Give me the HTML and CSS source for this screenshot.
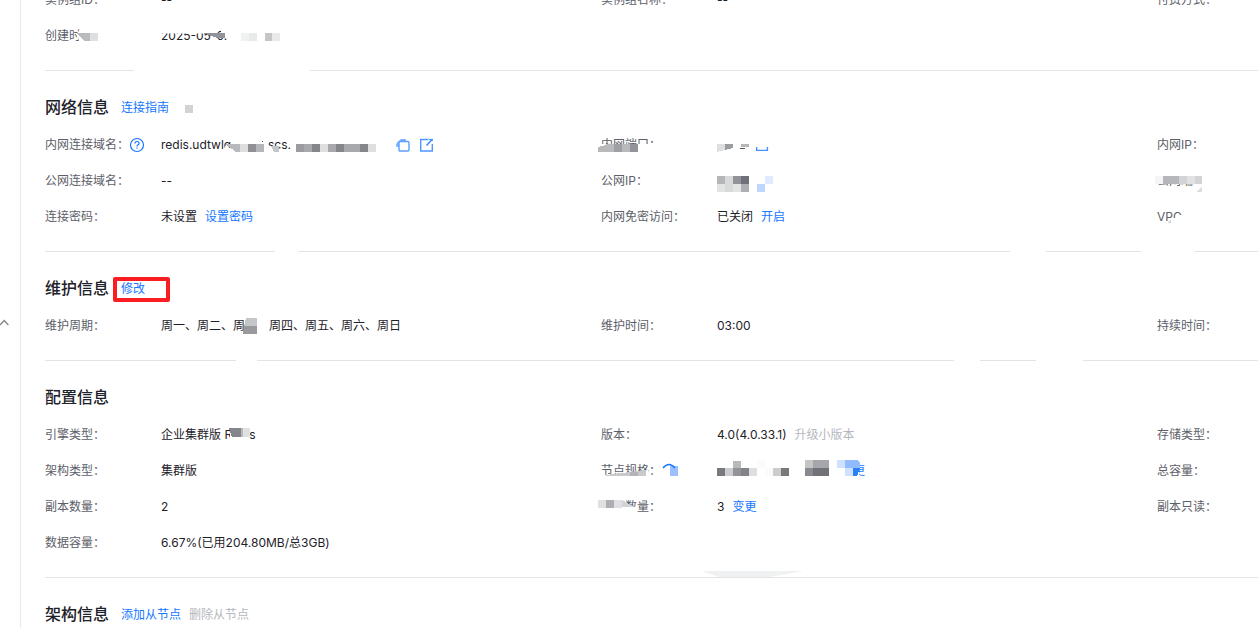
FILE: index.html
```html
<!DOCTYPE html>
<html lang="zh-CN">
<head>
<meta charset="utf-8">
<title>实例详情</title>
<link rel="stylesheet" href="styles.css">
</head>
<body>
<div class="page">
  <aside class="rail">
    <button class="collapse" type="button" aria-label="收起">
      <svg width="9" height="7" viewBox="0 0 9 7"><path d="M0 6 4.2 1.6 8.4 6" fill="none" stroke="#85878c" stroke-width="1.4"/></svg>
    </button>
  </aside>
  <main class="content">
    <section class="section section-first">
      <dl class="fields">
        <div class="field"><dt>实例组ID：</dt><dd>--</dd></div>
        <div class="field"><dt>实例组名称：</dt><dd>--</dd></div>
        <div class="field"><dt>付费方式：</dt><dd></dd></div>
        <div class="field"><dt>创建时间：</dt><dd>2025-05-0.</dd></div>
      </dl>
    </section>

    <section class="section">
      <header class="head"><h2>网络信息</h2><a href="#">连接指南</a></header>
      <dl class="fields">
        <div class="field">
          <dt>内网连接域名：<svg class="help" width="16" height="16" viewBox="0 0 16 16" fill="none" stroke="#1677ff" stroke-width="1.2"><circle cx="8" cy="8" r="6.5"/><path d="M5.9 6.6c0-1.3.9-2.1 2.1-2.1s2.1.8 2.1 1.9c0 1.3-2.1 1.5-2.1 3"/><path d="M8 10.5v1.3"/></svg></dt>
          <dd>
            <span class="host"><span>redis.udtwlq</span><span>scs.</span></span>
            <a class="icon" href="#" aria-label="复制"><svg width="16" height="16" viewBox="0 0 16 16" fill="none"><path d="M2.500 10V6.500" stroke="#8bbcff" stroke-width="3"/><path d="M2 5.500 6 2h5v2.500H4.500V8H2z" fill="#7fb3ff"/><rect x="4" y="4.500" width="10" height="9.500" rx="1" fill="#fff" stroke="#5b9fff" stroke-width="1.400"/></svg></a>
            <a class="icon" href="#" aria-label="编辑"><svg width="16" height="16" viewBox="0 0 16 16" fill="none" stroke="#4d96ff" stroke-width="1.400"><path d="M9.500 2.500H1.700v11.500h11.600V7"/><path d="M7.500 8.500 13.500 2" stroke="#2e84ff"/><path d="M10 2.500h3.300V4" stroke-width="1"/></svg></a>
          </dd>
        </div>
        <div class="field"><dt>内网端口：</dt><dd></dd></div>
        <div class="field"><dt>内网IP：</dt><dd></dd></div>
        <div class="field"><dt>公网连接域名：</dt><dd>--</dd></div>
        <div class="field"><dt>公网IP：</dt><dd></dd></div>
        <div class="field"><dt>公网端口：</dt><dd></dd></div>
        <div class="field"><dt>连接密码：</dt><dd>未设置<a href="#">设置密码</a></dd></div>
        <div class="field"><dt>内网免密访问：</dt><dd>已关闭<a href="#">开启</a></dd></div>
        <div class="field"><dt>VPC</dt><dd></dd></div>
      </dl>
    </section>

    <section class="section">
      <header class="head"><h2>维护信息</h2><a class="marked" href="#">修改</a></header>
      <dl class="fields">
        <div class="field"><dt>维护周期：</dt><dd>周一、周二、周三、周四、周五、周六、周日</dd></div>
        <div class="field"><dt>维护时间：</dt><dd>03:00</dd></div>
        <div class="field"><dt>持续时间：</dt><dd></dd></div>
      </dl>
    </section>

    <section class="section">
      <header class="head"><h2>配置信息</h2></header>
      <dl class="fields">
        <div class="field"><dt>引擎类型：</dt><dd>企业集群版 Redis</dd></div>
        <div class="field"><dt>版本：</dt><dd>4.0(4.0.33.1)<button class="text-button" type="button" disabled>升级小版本</button></dd></div>
        <div class="field"><dt>存储类型：</dt><dd></dd></div>
        <div class="field"><dt>架构类型：</dt><dd>集群版</dd></div>
        <div class="field"><dt>节点规格：</dt><dd><span class="spec"></span><a href="#">变更</a></dd></div>
        <div class="field"><dt>总容量：</dt><dd></dd></div>
        <div class="field"><dt>副本数量：</dt><dd>2</dd></div>
        <div class="field"><dt>节点数量：</dt><dd>3<a href="#">变更</a></dd></div>
        <div class="field"><dt>副本只读：</dt><dd></dd></div>
        <div class="field"><dt>数据容量：</dt><dd>6.67%(已用204.80MB/总3GB)</dd></div>
      </dl>
    </section>

    <section class="section">
      <header class="head"><h2>架构信息</h2><a href="#">添加从节点</a><button class="text-button" type="button" disabled>删除从节点</button></header>
    </section>
  </main>

  <svg class="redaction" width="1258" height="628" viewBox="0 0 1258 628" aria-hidden="true">
    <!-- erased areas -->
    <g fill="#fff">
      <path d="M76 34 81 29h20v17H82z"/>
      <path d="M160 26h70v7.500h-70zM213 33h8v-4h-8z"/>
      <path d="M134 68h176v5H134z"/>
      <path d="M225 146 236 150v6h-11z"/>
      <path d="M266 138h7v4h-7zM266 146h6l5 9h-13z"/>
      <path d="M598 144h80v13h-80z"/>
      <path d="M1155 172h60v9.500h-60zM1193 180h25v12h-25z"/>
      <path d="M1178 216h12v8h-15zM1173 218h8v6h-8z"/>
      <path d="M275 249h23v5h-23zM1010 249h36v5h-36zM1141 249h53v5h-53z"/>
      <path d="M247 316h21v18h-24z"/>
      <path d="M236 358h21v5h-21zM954 358h26v5h-26zM1036 358h47v5h-47z"/>
      <path d="M230 426h20v16h-20z"/>
      <path d="M605 475 648 470v9h-43zM597 498h28v17h-28zM625 507h12v8h-12zM625 498h17v4z"/>
      <path d="M835 460h24v18h-24z"/>
    </g>
    <g shape-rendering="crispEdges">
      <path fill="#b9bbbd" d="M76 33h14v8h-6z"/><path fill="#dedfe0" d="M90 33h8v8h-8z"/>
      <path fill="#909399" d="M202 33h23v5h-8z"/>
      <path fill="#f0f1f1" d="M241 33h8v8h-8z"/><path fill="#e8e9e9" d="M249 33h8v8h-8zM272 33h8v8h-8z"/><path fill="#c4c5c7" d="M265 33h7v8h-7z"/>
      <path fill="#d2d3d5" d="M185 105h8v8h-8z"/>
      <path fill="#b8b9bc" d="M225 144h15v8h-4z"/><path fill="#dedede" d="M240 144h8v8h-8z"/><path fill="#8e9095" d="M248 144h8v8h-8z"/><path fill="#b5b6ba" d="M256 144h8v8h-8z"/>
      <path fill="#55585e" d="M262 141h1v1h-1z"/>
      <path fill="#c5c6c8" d="M271 146h8v6h-5z"/>
      <path fill="#9b9ca0" d="M296 144h8v8h-8z"/><path fill="#a8a9ad" d="M304 144h8v8h-8zM328 144h8v8h-8zM344 144h16v8h-16z"/><path fill="#85868b" d="M312 144h8v8h-8zM336 144h8v8h-8zM360 144h8v8h-8z"/><path fill="#dfdfe0" d="M320 144h8v8h-8zM368 144h8v8h-8z"/>
      <path fill="#b8b9bb" d="M598 147 606 145v7h-8zM606 144h8v8h-8zM622 144h8v8h-8z"/><path fill="#9d9fa4" d="M614 144h8v8h-8z"/><path fill="#929499" d="M630 144h8v8h-8z"/>
      <path fill="#dedfe0" d="M717 144h8v6l-8 2z"/><path fill="#9b9da1" d="M725 144h8v4l-8 2z"/><path fill="#b6b7ba" d="M741 144h8v3h-8z"/><path fill="#55585e" d="M740 148h5v1h-5z"/>
      <path fill="#b5b6b8" d="M717 176h8v8h-8z"/><path fill="#d8d9da" d="M725 176h8v8h-8zM725 184h8v8h-8z"/><path fill="#919398" d="M733 176h8v8h-8z"/><path fill="#6e7177" d="M741 176h8v8h-8z"/><path fill="#e2e3e3" d="M717 184h8v8h-8zM733 184h8v8h-8z"/><path fill="#adafb3" d="M741 184h8v8h-8z"/>
      <path fill="#e0ebff" d="M765 176h8v8h-8z"/><path fill="#bfd6ff" d="M757 184h8v8h-8z"/>
      <path fill="#f5f5f5" d="M1155 176h8v8h-8z"/><path fill="#b6b7bb" d="M1163 176h16v8h-16z"/><path fill="#d2d3d5" d="M1179 176h8v8h-8zM1195 176h7v8h-7z"/><path fill="#e2e2e3" d="M1187 176h8v8h-8z"/>
      <path fill="#dcdddd" d="M1202 186v6h-6z"/><path fill="#d4d5d6" d="M1171 219v4h-4z"/>
      <path fill="#c5c6c8" d="M246 318h11v8h-13z"/><path fill="#999a9e" d="M244 326h13v8h-14z"/>
      <path fill="#85868b" d="M229 428h12v9h-9z"/><path fill="#b8b9bc" d="M241 428h2v9h-2z"/><path fill="#e1e1e2" d="M243 428h7v9h-7z"/>
      <path fill="#c8c9ca" d="M606 475 646 470v6h-40z"/><path fill="#b3b4b7" d="M630 472h8v4h-8z"/>
      <path fill="#9cc0ff" d="M670 466h8v10h-8z"/>
      <path fill="#77797e" d="M717 468h8v8h-8zM781 468h8v8h-8z"/><path fill="#cccdce" d="M725 468h8v8h-8zM773 468h8v8h-8z"/><path fill="#b8b9bb" d="M733 461h8v7h-8z"/><path fill="#929498" d="M733 468h8v8h-8z"/><path fill="#818388" d="M741 468h8v8h-8z"/><path fill="#818388" d="M749 468h0v8h0z"/><path fill="#dededf" d="M749 468h8v8h-8z"/><path fill="#fbfbfb" d="M757 460h8v8h-8zM765 468h8v8h-8z"/>
      <path fill="#c4c5c7" d="M805 460h8v8h-8z"/><path fill="#a6a7ab" d="M813 460h16v8h-16z"/><path fill="#888a8f" d="M805 468h8v8h-8z"/><path fill="#707277" d="M813 468h16v8h-16z"/>
      <path fill="#d0e1ff" d="M837 460h8v8h-8zM845 468h8v8h-8z"/><path fill="#91baff" d="M845 460h13l2 3v5h-15z"/><path fill="#2c80f7" d="M853 468h7l-3 8h-4z"/>
      <path fill="#dfe0e1" d="M598 500h8v8h-8zM614 500h8v8h-8z"/><path fill="#adaeb2" d="M606 500h8v8h-8z"/><path fill="#d2d3d5" d="M622 500 635 507h-13z"/>
    </g>
    <path fill="#f0f1f2" d="M702 571h102l-34 6h-51z"/>
    <path d="M756.600 147v3.400h10.800V147" fill="none" stroke="#4791ff" stroke-width="1.400"/>
    <path d="M663 468q6-7 12 0" fill="none" stroke="#1677ff" stroke-width="1.400"/>
  </svg>
</div>
</body>
</html>
```
FILE: styles.css
```css
* {
  box-sizing: border-box;
}

body {
  margin: 0;
  overflow: hidden;
  background: #fff;
  color: #1d2129;
  font: 12px/20px Inter, "Noto Sans CJK SC", sans-serif;
}

.page {
  position: relative;
  display: flex;
  height: 100vh;
  overflow: hidden;
}

.rail {
  position: relative;
  flex: 0 0 21px;
  border-right: 1px solid #e9eaec;
}

.collapse {
  position: absolute;
  top: 319px;
  left: 0;
  display: flex;
  padding: 0;
  border: 0;
  background: none;
}

.content {
  flex: 1;
  min-width: 0;
  padding-left: 24px;
}

.section {
  min-width: 1668px;
  padding-bottom: 24px;
}

.section + .section {
  padding-top: 24px;
  border-top: 1px solid #e2e4e7;
}

/* the panel is scrolled, its first row is half out of view */
.section-first {
  margin-top: -10px;
}

.head {
  display: flex;
  align-items: center;
  gap: 8px;
  height: 24px;
  margin-bottom: 16px;
}

.head a,
.head button {
  padding-top: 2px;
}

h2 {
  margin: 0 4px 0 0;
  font-size: 16px;
  font-weight: 500;
  line-height: 24px;
}

.fields {
  display: grid;
  grid-template-columns: repeat(3, minmax(556px, 1fr));
  gap: 16px 0;
  margin: 0;
}

.field {
  display: flex;
  height: 20px;
}

dt {
  display: flex;
  align-items: center;
  flex: 0 0 116px;
  color: #5c6068;
  white-space: nowrap;
}

dd {
  display: flex;
  align-items: center;
  gap: 8px;
  margin: 0;
  white-space: nowrap;
}

a {
  color: #1677ff;
  text-decoration: none;
}

.icon {
  display: flex;
}

.host {
  display: grid;
  grid-template-columns: 107px 119px;
}

.spec {
  width: 116px;
}

.text-button {
  padding: 0;
  border: 0;
  background: none;
  color: #b4b7bd;
  font: inherit;
}

.marked {
  position: relative;
}

.marked::after {
  content: "";
  position: absolute;
  box-sizing: border-box;
  top: 0;
  left: -8px;
  width: 57px;
  height: 25px;
  border: 4px solid #fa1e23;
  border-radius: 2px;
}

.redaction {
  position: absolute;
  top: 0;
  left: 0;
  pointer-events: none;
}
```
